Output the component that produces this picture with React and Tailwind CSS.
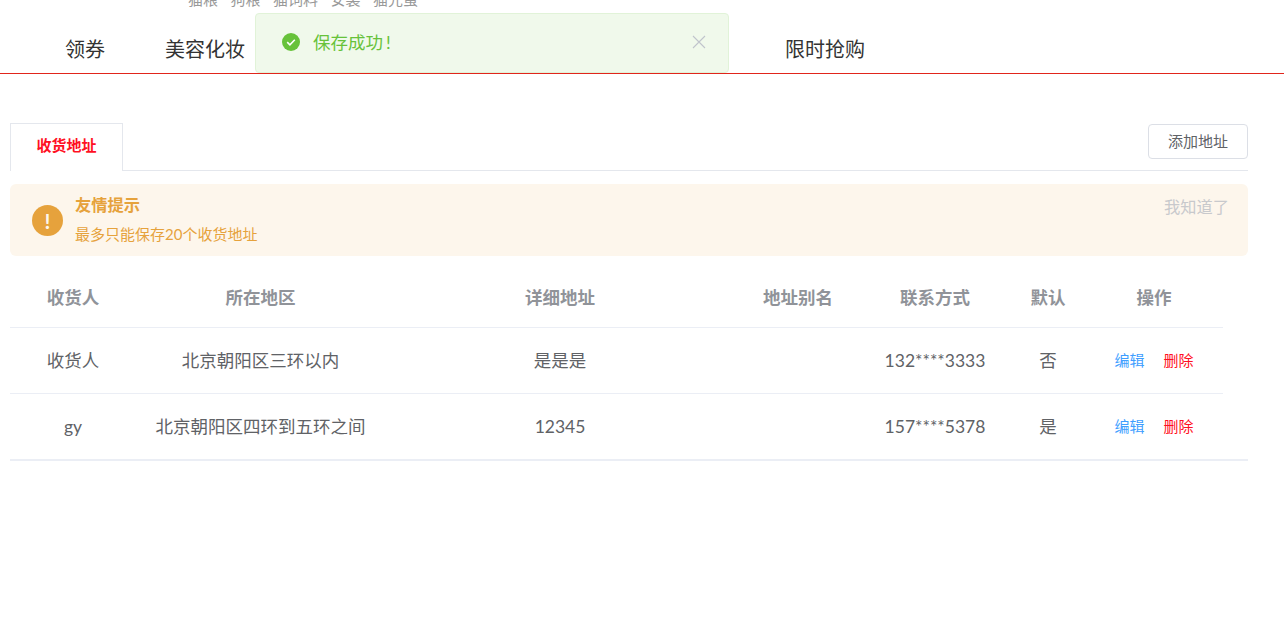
const sans = "font-['Lato','Noto_Sans_CJK_SC',sans-serif]";

const columns = "grid grid-cols-[126px_249px_350px_126px_148px_78px_134px]";

const headers = ["收货人", "所在地区", "详细地址", "地址别名", "联系方式", "默认", "操作"];

const rows = [
  { name: "收货人", region: "北京朝阳区三环以内", detail: "是是是", alias: "", phone: "132****3333", isDefault: "否" },
  { name: "gy", region: "北京朝阳区四环到五环之间", detail: "12345", alias: "", phone: "157****5378", isDefault: "是" }
];

const navItems = [
  { label: "领券", width: "w-[100px]" },
  { label: "美容化妆", width: "w-[140px]" },
  { label: "", width: "w-[480px]" },
  { label: "限时抢购", width: "w-[140px]" }
];

function Toast() {
  return (
    <div className="absolute left-[255px] top-[13px] flex h-[60px] w-[474px] items-center rounded border border-[#e1f3d8] bg-[#f0f9eb] pl-[26px] pr-[22px]">
      <svg width="18" height="18" viewBox="0 0 18 18" className="-mt-[2px] shrink-0">
        <circle cx="9" cy="9" r="9" fill="#67c23a" />
        <path d="M5.2 9.2l2.7 2.6 4.9-5" fill="none" stroke="#fff" strokeWidth="1.6" />
      </svg>
      <span className="ml-[13px] flex-1 text-[17.5px] leading-none text-[#67c23a]">
        保存成功<span className="ml-[3px]">!</span>
      </span>
      <svg width="14" height="14" viewBox="0 0 14 14" className="-mt-[2px] shrink-0">
        <path d="M1 1l12 12M13 1L1 13" fill="none" stroke="#c0c4cc" strokeWidth="1.1" />
      </svg>
    </div>
  );
}

function Notice() {
  return (
    <div className="mt-[13px] flex h-[72px] w-[1238px] rounded-md bg-[#fdf6ec] pl-[22px] pr-[19px]">
      <div className="mt-[21px] flex h-[31px] w-[31px] shrink-0 items-center justify-center rounded-full bg-[#e6a23c] text-[21px] font-bold leading-none text-[#fdf6ec]">
        !
      </div>
      <div className="ml-[12px] flex-1 pt-[9px]">
        <div className="text-[16.25px] font-bold leading-[24px] text-[#e6a23c]">友情提示</div>
        <div className="mt-[6px] text-[15px] leading-[22px] text-[#e6a23c]">最多只能保存20个收货地址</div>
      </div>
      <div className="pt-[12px] text-[16.25px] leading-[22px] text-[#c8c9cc]">我知道了</div>
    </div>
  );
}

function AddressTable() {
  return (
    <div className="w-[1238px] border-b-2 border-[#ebeef5]">
      <div className="w-[1213px]">
        <div className={`${columns} h-[58px] items-center border-b border-[#ebeef5] text-center text-[17.5px] font-bold text-[#909399]`}>
          {headers.map((header) => (
            <div key={header}>{header}</div>
          ))}
        </div>
        {rows.map((row, index) => (
          <div
            key={row.phone}
            className={`${columns} items-center pt-[1px] text-center text-[17.5px] text-[#606266] ${index === 0 ? "h-[66px] border-b border-[#ebeef5]" : "h-[65px]"}`}
          >
            <div>{row.name}</div>
            <div>{row.region}</div>
            <div>{row.detail}</div>
            <div>{row.alias}</div>
            <div>{row.phone}</div>
            <div>{row.isDefault}</div>
            <div className="-mt-[2px] flex justify-center gap-[19px] text-[15px]">
              <span className="text-[#409eff]">编辑</span>
              <span className="text-[#ff0f23]">删除</span>
            </div>
          </div>
        ))}
      </div>
    </div>
  );
}

export default function App() {
  return (
    <div className={`relative h-[638px] overflow-hidden bg-white ${sans}`}>
      <div className="h-[8px] overflow-hidden">
        <div className="-mt-[12px] flex gap-[12.5px] pl-[188px] text-[15px] leading-[22px] text-[#999999]">
          <span>猫粮</span>
          <span>狗粮</span>
          <span>猫饲料</span>
          <span>安装</span>
          <span>猫先蛋</span>
        </div>
      </div>
      <div className="flex h-[66px] items-center border-b border-[#e1251b] pb-[2px] pl-[35px] pt-[18px]">
        {navItems.map((item) => (
          <div key={item.width + item.label} className={`${item.width} text-center text-xl leading-none text-[#333333]`}>
            {item.label}
          </div>
        ))}
      </div>
      <Toast />

      <div className="pl-[10px] pt-[49px]">
        <div className="flex h-[48px] w-[1238px] items-end justify-between border-b border-[#e4e7ed]">
          <div className="-mb-px flex h-[48px] w-[113px] items-center justify-center border border-b-0 border-[#e4e7ed] bg-white pb-[5px] text-[15px] font-bold text-[#ff0f23]">
            收货地址
          </div>
          <button className="mb-[11px] h-[35px] w-[100px] rounded border border-[#dcdfe6] bg-white pb-[1px] text-[15px] text-[#606266]">
            添加地址
          </button>
        </div>
        <Notice />
        <div className="mt-[14px]">
          <AddressTable />
        </div>
      </div>
    </div>
  );
}
